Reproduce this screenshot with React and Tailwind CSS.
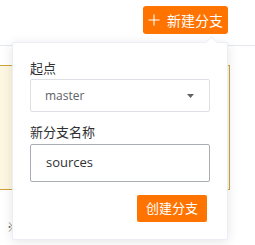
import React from 'react';

const PlusIcon = () => (
  <svg width="12" height="12" viewBox="0 0 12 12" fill="none">
    <path d="M6 0.5V11.5M0.5 6H11.5" stroke="white" strokeWidth="1.1" />
  </svg>
);

const App = () => {
  return (
    <div className="relative w-[255px] h-[245px] overflow-hidden bg-white font-['Open_Sans','Noto_Sans_CJK_SC',sans-serif]">
      {/* page behind the popover */}
      <div className="h-[46px] border-b border-[#e4e7ed] flex justify-end items-start pt-[6px] pr-[27px]">
        <button className="h-[28px] w-[85px] bg-[#ff7300] rounded-[3px] text-white text-[14px] flex items-center justify-center gap-[7px]">
          <PlusIcon />
          <span>新建分支</span>
        </button>
      </div>
      <div className="mt-[19px] -ml-[2px] w-[232px] h-[125px] border border-[#c9a23a] bg-[#fdf6e0]" />
      <div className="mt-[31px] pl-[7px] text-[12px] text-[#555] leading-[14px]">※</div>

      {/* popover */}
      <div className="absolute left-[12px] top-[42px] w-[216px] h-[198px] bg-white border border-[#ebeef5] rounded-[2px] shadow-[0_2px_12px_0_rgba(0,0,0,0.1)] px-[17px] pt-[15px]">
        <div className="absolute -top-[5px] left-[194px] w-[9px] h-[9px] rotate-45 bg-white border-l border-t border-[#ebeef5]" />
        <div className="h-[20px] leading-[20px] text-[13px] text-[#303133]">起点</div>
        <div className="mt-[1px] h-[33px] border border-[#dcdfe6] rounded-[2px] flex items-center justify-between pl-[14px] pr-[15px]">
          <span className="text-[12px] text-[#606266]">master</span>
          <svg width="7" height="4" viewBox="0 0 7 4">
            <path d="M0 0H7L3.5 4Z" fill="#606266" />
          </svg>
        </div>
        <div className="mt-[10px] h-[20px] leading-[20px] text-[13px] text-[#303133]">新分支名称</div>
        <div className="mt-[2px] h-[38px] border border-[#a9adb5] rounded-[2px] flex items-center pl-[15px]">
          <span className="text-[13px] text-[#303133]">sources</span>
        </div>
        <div className="mt-[13px] flex justify-end pr-[3px]">
          <button className="h-[27px] w-[70px] bg-[#ff7300] rounded-[2px] text-white text-[13px]">创建分支</button>
        </div>
      </div>
    </div>
  );
};

export default App;
